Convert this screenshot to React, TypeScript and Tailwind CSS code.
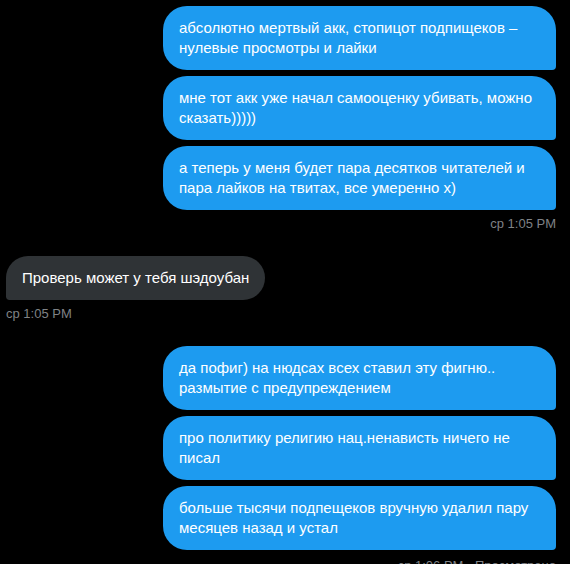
import React from 'react';

type Msg = { id: number; text: string; mine: boolean };

const sent1: Msg[] = [
  { id: 1, mine: true, text: 'абсолютно мертвый акк, стопицот подпищеков – нулевые просмотры и лайки' },
  { id: 2, mine: true, text: 'мне тот акк уже начал самооценку убивать, можно сказать)))))' },
  { id: 3, mine: true, text: 'а теперь у меня будет пара десятков читателей и пара лайков на твитах, все умеренно х)' },
];

const sent2: Msg[] = [
  { id: 5, mine: true, text: 'да пофиг) на нюдсах всех ставил эту фигню.. размытие с предупреждением' },
  { id: 6, mine: true, text: 'про политику религию нац.ненависть ничего не писал' },
  { id: 7, mine: true, text: 'больше тысячи подпещеков вручную удалил пару месяцев назад и устал' },
];

const Bubble = ({ msg }: { msg: Msg }) => (
  <div
    className={`px-4 py-3 text-[15px] leading-5 text-white ${
      msg.mine
        ? 'w-[393px] self-end rounded-[24px] rounded-br-[4px] bg-[#1d9bf0]'
        : 'self-start rounded-[24px] rounded-bl-[4px] bg-[#2f3336]'
    }`}
  >
    {msg.text}
  </div>
);

const Stamp = ({ text, right }: { text: string; right?: boolean }) => (
  <div className={`mt-[6px] text-[13px] leading-4 text-[#7f8286] ${right ? 'self-end' : 'self-start'}`}>
    {text}
  </div>
);

export default function App() {
  return (
    <div
      className="h-[564px] w-[570px] overflow-hidden bg-black pl-[6px] pr-[14px] pt-[6px]"
      style={{ fontFamily: '"Liberation Sans", Arial, sans-serif' }}
    >
      <div className="flex flex-col">
        <div className="flex flex-col gap-[6px]">
          {sent1.map((m) => (
            <Bubble key={m.id} msg={m} />
          ))}
        </div>
        <Stamp text="ср 1:05 PM" right />

        <div className="mt-6 flex flex-col">
          <Bubble msg={{ id: 4, mine: false, text: 'Проверь может у тебя шэдоубан' }} />
          <Stamp text="ср 1:05 PM" />
        </div>

        <div className="mt-6 flex flex-col gap-[6px]">
          {sent2.map((m) => (
            <Bubble key={m.id} msg={m} />
          ))}
        </div>
        <div className="mt-2 self-end text-[13px] leading-4 text-[#7f8286]">ср 1:06 PM · Просмотрено</div>
      </div>
    </div>
  );
}
